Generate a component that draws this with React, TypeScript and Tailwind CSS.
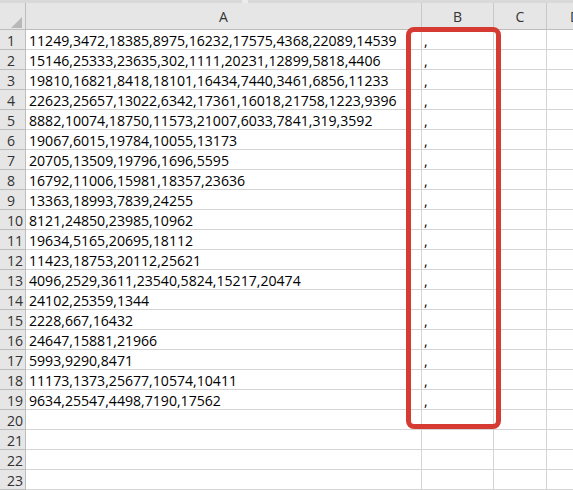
import React from "react";

const rows: string[] = [
  "11249,3472,18385,8975,16232,17575,4368,22089,14539",
  "15146,25333,23635,302,1111,20231,12899,5818,4406",
  "19810,16821,8418,18101,16434,7440,3461,6856,11233",
  "22623,25657,13022,6342,17361,16018,21758,1223,9396",
  "8882,10074,18750,11573,21007,6033,7841,319,3592",
  "19067,6015,19784,10055,13173",
  "20705,13509,19796,1696,5595",
  "16792,11006,15981,18357,23636",
  "13363,18993,7839,24255",
  "8121,24850,23985,10962",
  "19634,5165,20695,18112",
  "11423,18753,20112,25621",
  "4096,2529,3611,23540,5824,15217,20474",
  "24102,25359,1344",
  "2228,667,16432",
  "24647,15881,21966",
  "5993,9290,8471",
  "11173,1373,25677,10574,10411",
  "9634,25547,4498,7190,17562",
  "",
  "",
  "",
  "",
];

export default function App() {
  return (
    <div
      className="relative w-[573px] h-[490px] overflow-hidden bg-white text-black"
      style={{ fontFamily: '"Open Sans", "Liberation Sans", sans-serif' }}
    >
      {/* top strip */}
      <div className="flex h-[3px] bg-[#d9d9d9]">
        <div className="w-[242px]" />
        <div className="w-[6px] bg-[#ececec]" />
        <div className="flex-1" />
      </div>
      {/* header row */}
      <div className="flex h-[27px] bg-[#e6e6e6] border-b border-[#bdbdbd] text-[14px] text-[#333]">
        <div className="w-[26px] shrink-0 border-r border-[#bdbdbd] relative">
          <svg className="absolute left-[11px] top-[14px]" width="11" height="11" viewBox="0 0 11 11">
            <polygon points="11,0 11,11 0,11" fill="#b8b8b8" />
          </svg>
        </div>
        <div className="w-[396px] shrink-0 border-r border-[#c8c8c8] flex items-end justify-center pb-[2px] leading-[20px]">A</div>
        <div className="w-[72px] shrink-0 border-r border-[#c8c8c8] flex items-end justify-center pb-[2px] leading-[20px]">B</div>
        <div className="w-[53px] shrink-0 border-r border-[#c8c8c8] flex items-end justify-center pb-[2px] leading-[20px]">C</div>
        <div className="flex-1 flex items-end pl-[23px] pb-[2px] leading-[20px]">D</div>
      </div>
      {/* rows */}
      {rows.map((r, i) => (
        <div key={i} className="flex h-[20px] text-[14.1px]">
          <div className="w-[26px] shrink-0 bg-[#e6e6e6] border-r border-b border-[#bdbdbd] pl-[7px] pt-[3px] leading-[16px] text-[#333]">
            {i + 1}
          </div>
          <div className="w-[396px] shrink-0 border-r border-b border-[#d4d4d4] pl-[3px] pt-[3px] leading-[16px] whitespace-nowrap overflow-hidden">
            {r}
          </div>
          <div className="w-[72px] shrink-0 border-r border-b border-[#d4d4d4] pl-[2px] pt-[3px] leading-[16px]">
            {i < 19 ? "," : ""}
          </div>
          <div className="w-[53px] shrink-0 border-r border-b border-[#d4d4d4]" />
          <div className="flex-1 border-b border-[#d4d4d4]" />
        </div>
      ))}
      {/* red annotation box */}
      <div className="absolute left-[406px] top-[27px] w-[95px] h-[402px] border-[5px] border-[#d63b33] rounded-[8px]" />
    </div>
  );
}
